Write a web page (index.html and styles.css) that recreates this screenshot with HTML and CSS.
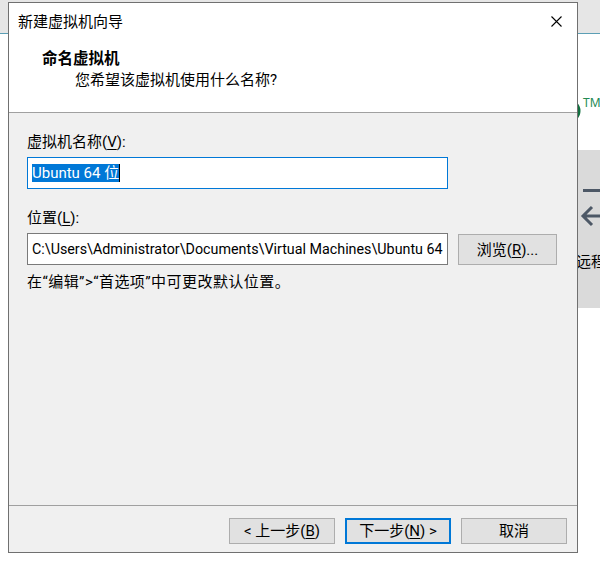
FILE: index.html
```html
<!DOCTYPE html>
<html lang="zh-CN">
<head>
<meta charset="utf-8">
<title>新建虚拟机向导</title>
<link rel="stylesheet" href="styles.css">
</head>
<body>
<div class="desktop">
  <div class="topband"></div>
  <div class="main">
    <div class="filler"></div>
    <div class="side">
      <div class="logo-area">
        <svg class="logo-arc" width="20" height="30" viewBox="0 0 20 30"><circle cx="-1" cy="15" r="10" fill="none" stroke="#11703f" stroke-width="3"/></svg>
        <span class="tm">TM</span>
      </div>
      <div class="panel">
        <svg class="panel-icon" width="22" height="50" viewBox="0 0 22 50"><path d="M5 4.5H22" stroke="#4d5866" stroke-width="3" fill="none"/><path d="M22 30H6M14 21L5 30L14 39" stroke="#4d5866" stroke-width="3" fill="none"/></svg>
        <span class="panel-text">远程</span>
      </div>
    </div>
  </div>
</div>

<div class="dialog">
  <div class="head">
    <div class="titlebar">
      <span class="title">新建虚拟机向导</span>
      <svg class="close" width="11" height="11" viewBox="0 0 11 11"><path d="M0.5 0.5L10.5 10.5M10.5 0.5L0.5 10.5" stroke="#000" stroke-width="1.1" fill="none"/></svg>
    </div>
    <div class="head-title">命名虚拟机</div>
    <div class="head-sub">您希望该虚拟机使用什么名称?</div>
  </div>
  <div class="body">
    <div class="label">虚拟机名称(<u>V</u>):</div>
    <div class="field focused"><span class="sel">Ubuntu 64 位</span><span class="caret"></span></div>
    <div class="label label2">位置(<u>L</u>):</div>
    <div class="row">
      <div class="field path">C:\Users\Administrator\Documents\Virtual Machines\Ubuntu 64</div>
      <button class="btn browse">浏览(<u>R</u>)...</button>
    </div>
    <div class="hint">在“编辑”&gt;“首选项”中可更改默认位置。</div>
  </div>
  <div class="footer">
    <button class="btn">&lt; 上一步(<u>B</u>)</button>
    <button class="btn default">下一步(<u>N</u>) &gt;</button>
    <button class="btn">取消</button>
  </div>
</div>
</body>
</html>
```

FILE: styles.css
```css
html, body {
  margin: 0;
  padding: 0;
}
body {
  width: 600px;
  height: 562px;
  overflow: hidden;
  position: relative;
  background: #fff;
  font-family: Roboto, "Noto Sans CJK SC", sans-serif;
  font-size: 15px;
  color: #000;
}
.desktop {
  display: flex;
  flex-direction: column;
  height: 562px;
}
.topband {
  height: 33px;
  background: #e6e6e6;
  border-bottom: 1px solid #5b9fb5;
}
.main {
  flex: 1;
  display: flex;
}
.filler {
  flex: 1;
}
.side {
  width: 30px;
  display: flex;
  flex-direction: column;
}
.logo-area {
  height: 116px;
  position: relative;
}
.logo-arc {
  position: absolute;
  left: 0;
  top: 62px;
}
.tm {
  position: absolute;
  left: 13px;
  top: 62px;
  font-family: "Noto Sans", sans-serif;
  font-size: 12px;
  line-height: 14px;
  color: #238a52;
}
.panel {
  height: 158px;
  background: #dadada;
  display: flex;
  flex-direction: column;
  padding-left: 8px;
  padding-top: 36px;
  box-sizing: border-box;
}
.panel-icon {
  display: block;
}
.panel-text {
  margin-top: 16px;
  margin-left: -2px;
  white-space: nowrap;
  font-size: 15px;
  line-height: 20px;
}

.dialog {
  position: absolute;
  left: 8px;
  top: 2px;
  width: 568px;
  height: 549px;
  border: 1px solid #707070;
  background: #f0f0f0;
  display: flex;
  flex-direction: column;
}
.head {
  height: 109px;
  background: #fff;
  border-bottom: 1px solid #a0a0a0;
}
.titlebar {
  height: 37px;
  display: flex;
  align-items: center;
  justify-content: space-between;
  padding: 0 15px 0 9px;
}
.title {
  line-height: 20px;
}
.close {
  display: block;
}
.head-title {
  margin: 9px 0 0 33px;
  font-weight: bold;
  font-size: 15.5px;
  line-height: 20px;
}
.head-sub {
  margin: 1px 0 0 66px;
  line-height: 20px;
}
.body {
  flex: 1;
  padding: 19px 0 0 18px;
}
.label {
  line-height: 20px;
}
.label2 {
  margin-top: 19px;
}
u {
  text-decoration: underline;
  text-underline-offset: 2px;
}
.field {
  width: 421px;
  height: 32px;
  box-sizing: border-box;
  border: 1px solid #7a7a7a;
  background: #fff;
  margin-top: 5px;
  display: flex;
  align-items: center;
  padding-left: 4px;
  white-space: nowrap;
  overflow: hidden;
}
.focused {
  border-color: #0078d7;
}
.path {
  font-size: 14.3px;
}
.sel {
  background: #0078d7;
  color: #fff;
  line-height: 18px;
}
.caret {
  width: 1px;
  height: 18px;
  background: #000;
}
.row {
  display: flex;
  align-items: flex-end;
  gap: 10px;
  margin-top: 5px;
}
.row .field {
  margin-top: 0;
}
.btn {
  box-sizing: border-box;
  border: 1px solid #adadad;
  background: #e1e1e1;
  font-family: inherit;
  font-size: 15px;
  color: #000;
  padding: 0;
  margin: 0;
  line-height: 20px;
}
.browse {
  width: 99px;
  height: 31px;
}
.hint {
  margin-top: 7px;
  line-height: 20px;
  letter-spacing: 0.45px;
}
.footer {
  height: 47px;
  border-top: 1px solid #a0a0a0;
  display: flex;
  justify-content: flex-end;
  align-items: flex-start;
  gap: 10px;
  padding: 12px 10px 0 0;
  box-sizing: border-box;
}
.footer .btn {
  width: 106px;
  height: 26px;
}
.footer .btn.default {
  border: 2px solid #0078d7;
}
```
